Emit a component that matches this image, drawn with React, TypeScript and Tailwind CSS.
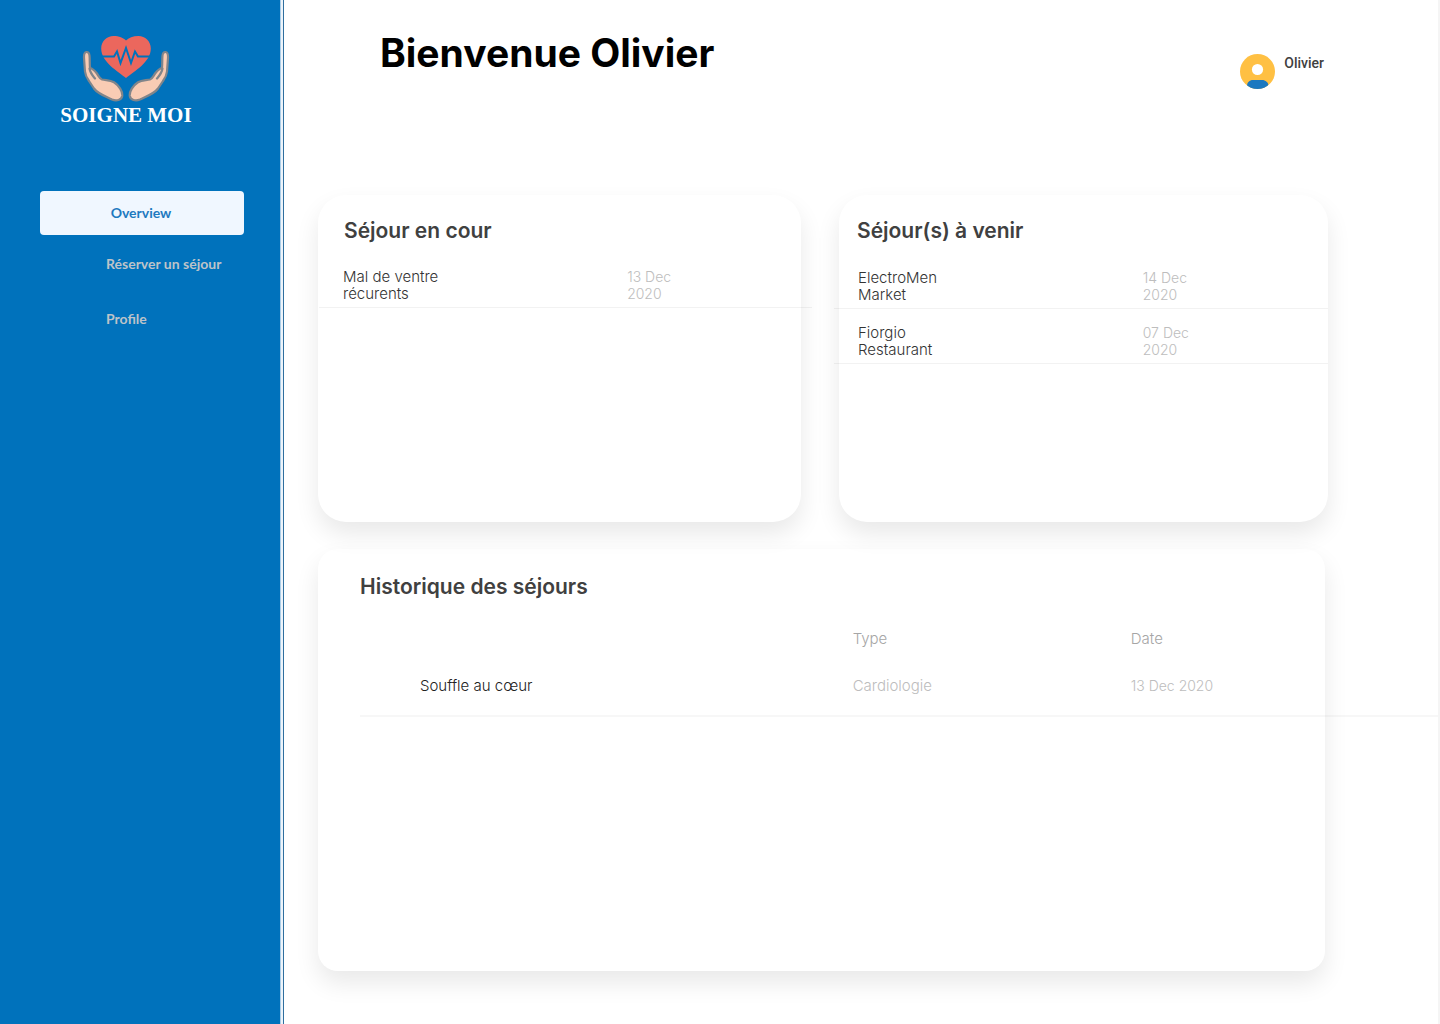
import React from "react";

type Stay = { name: [string, string]; date: [string, string] };

const currentStays: Stay[] = [
  { name: ["Mal de ventre", "récurents"], date: ["13 Dec", "2020"] },
];

const upcomingStays: Stay[] = [
  { name: ["ElectroMen", "Market"], date: ["14 Dec", "2020"] },
  { name: ["Fiorgio", "Restaurant"], date: ["07 Dec", "2020"] },
];

const history = [{ name: "Souffle au cœur", type: "Cardiologie", date: "13 Dec 2020" }];

function Hand() {
  return (
    <path
      d="M4.5 18C2.600 18.300 1.800 20.500 2 24L3 37.500C3.300 41 4.500 43.500 7 47L12 54.500C16 60 24 62.500 30 65.500C34.500 67.500 39.500 66 40.200 62C40.800 57.500 37 51.500 32 48.300C28 46 24 46.500 20 45.500C17.500 44.700 16.500 41.500 14.500 39C12.500 36.500 10.500 34.500 8 34C7.500 29 8 26 7.500 21.500C7.200 19 6 17.800 4.500 18Z M7.500 34.500C8.200 39 10.500 41.500 13 44.500"
      fill="#f9ccb4"
      stroke="#81858a"
      strokeWidth="2.200"
      strokeLinecap="round"
      strokeLinejoin="round"
    />
  );
}

function Logo() {
  return (
    <div className="flex w-[134px] flex-col items-center">
      <svg viewBox="0 0 88 68" className="h-[68px] w-[88px]" aria-hidden="true">
        <path
          d="M44 44C36 37.500 19.200 28 19.200 14.500C19.200 7 25 2 31.500 2C37 2 41.500 4 44 6.500C46.500 4 51 2 56.500 2C63 2 68.800 7 68.800 14.500C68.800 28 52 37.500 44 44Z"
          fill="#eb675d"
        />
        <path
          d="M19 22.500H32L35 17.500L38.500 29L44 14L49 29L53 17.500L56 22.500H69"
          fill="none"
          stroke="#0072bc"
          strokeWidth="2"
        />
        <Hand />
        <g transform="matrix(-1 0 0 1 88 0)">
          <Hand />
        </g>
      </svg>
      <span className="mt-px whitespace-nowrap font-['Liberation_Serif',serif] text-[21px] font-bold leading-6 text-white">
        SOIGNE MOI
      </span>
    </div>
  );
}

function Sidebar() {
  return (
    <aside className="flex w-[284px] shrink-0 border-r border-[#2f6f9f] bg-[#0072bc]">
      <div className="flex flex-1 flex-col pl-10">
        <div className="pl-[19px] pt-[34px]">
          <Logo />
        </div>
        <nav className="mr-9 mt-16 flex flex-col font-[Lato,sans-serif] text-sm font-bold leading-5 text-[#bdc3c9]">
          <a
            href="#overview"
            aria-current="page"
            className="rounded bg-[#f0f7ff] py-3 pr-0.5 text-center text-[#1e7abf]"
          >
            Overview
          </a>
          <a href="#reserver" className="mt-[19px] pl-[66px]">
            Réserver un séjour
          </a>
          <a href="#profile" className="mt-[35px] pl-[66px]">
            Profile
          </a>
        </nav>
      </div>
      <div className="w-[3px] border-l border-[#a9cde8] bg-[#eef4fa]" />
    </aside>
  );
}

function Avatar() {
  return (
    <svg viewBox="0 0 35 35" className="size-[35px]" aria-hidden="true">
      <defs>
        <clipPath id="avatar-disc">
          <circle cx="17.5" cy="17.5" r="17.5" />
        </clipPath>
      </defs>
      <g clipPath="url(#avatar-disc)">
        <rect width="35" height="35" fill="#ffc043" />
        <circle cx="17.500" cy="15.500" r="5.600" fill="#fff" />
        <path d="M7 35V32C7 28.500 9.500 26 13 26H22C25.500 26 28.500 28.500 28.500 32V35Z" fill="#1b78c0" />
      </g>
    </svg>
  );
}

function StayTable({ label, stays }: { label: string; stays: Stay[] }) {
  return (
    <table aria-label={label} className="w-full table-fixed text-left font-light leading-[17px]">
      <tbody>
        {stays.map((stay) => (
          <tr key={stay.name[0]} className="h-[55px] border-b border-black/5 align-bottom">
            <td className="w-[62.5%] pb-[5px] pl-6 text-[15px] leading-[17px] text-[#333333]">
              {stay.name[0]}
              <br />
              {stay.name[1]}
            </td>
            <td className="pb-[5px] text-sm leading-[17px] text-[#bdbdbd]">
              {stay.date[0]}
              <br />
              {stay.date[1]}
            </td>
          </tr>
        ))}
      </tbody>
    </table>
  );
}

const cardShadow = "bg-white shadow-[0_12px_24px_rgba(0,0,0,0.09)]";
const cardTitle = "text-[21px] font-semibold leading-6 text-[#404040]";

export default function App() {
  return (
    <div className="flex min-h-screen bg-white font-[Inter,sans-serif]">
      <Sidebar />
      <main className="min-w-0 flex-1 overflow-x-hidden border-r-2 border-[#f5f5f5] pb-[53px] pl-[34px] pr-[110px]">
        <header className="flex h-[195px] items-start justify-between pl-[62px]">
          <h1 className="pt-[29px] text-[39px] font-bold leading-[48px] text-black">Bienvenue Olivier</h1>
          <div className="flex items-start gap-[9px] pr-1 pt-[54px]">
            <Avatar />
            <span className="font-[Roboto,sans-serif] text-sm font-medium leading-[18px] text-[#404040]">
              Olivier
            </span>
          </div>
        </header>

        <div className="grid grid-cols-[483fr_489fr] gap-[38px]">
          <section className={`h-[327px] rounded-[28px] pt-6 ${cardShadow}`}>
            <h2 className={`pl-[26px] ${cardTitle}`}>Séjour en cour</h2>
            <div className="-mr-[11px] ml-px mt-[9px]">
              <StayTable label="Séjour en cour" stays={currentStays} />
            </div>
          </section>
          <section className={`h-[327px] rounded-[28px] pt-6 ${cardShadow}`}>
            <h2 className={`pl-[18px] ${cardTitle}`}>Séjour(s) à venir</h2>
            <div className="-ml-[5px] mt-[10px]">
              <StayTable label="Séjour(s) à venir" stays={upcomingStays} />
            </div>
          </section>
        </div>

        <section className={`mr-[3px] mt-[27px] h-[422px] rounded-[20px] pt-[26px] ${cardShadow}`}>
          <h2 className={`pl-[42px] ${cardTitle}`}>Historique des séjours</h2>
          <div className="-mr-[113px] ml-[42px] mt-[22px]">
            <table className="w-full table-fixed text-left text-[15px] leading-5">
              <thead>
                <tr className="h-9 text-[#a6a6a6]">
                  <th className="w-[45.7%]" aria-label="Séjour" />
                  <th className="w-[25.8%] font-light">Type</th>
                  <th className="font-light">Date</th>
                </tr>
              </thead>
              <tbody>
                {history.map((stay) => (
                  <tr key={stay.name} className="h-[59px] border-b-2 border-black/3 font-light text-[#bdbdbd]">
                    <td className="pl-[60px] text-[#222222]">{stay.name}</td>
                    <td>{stay.type}</td>
                    <td className="text-sm">{stay.date}</td>
                  </tr>
                ))}
              </tbody>
            </table>
          </div>
        </section>
      </main>
    </div>
  );
}
